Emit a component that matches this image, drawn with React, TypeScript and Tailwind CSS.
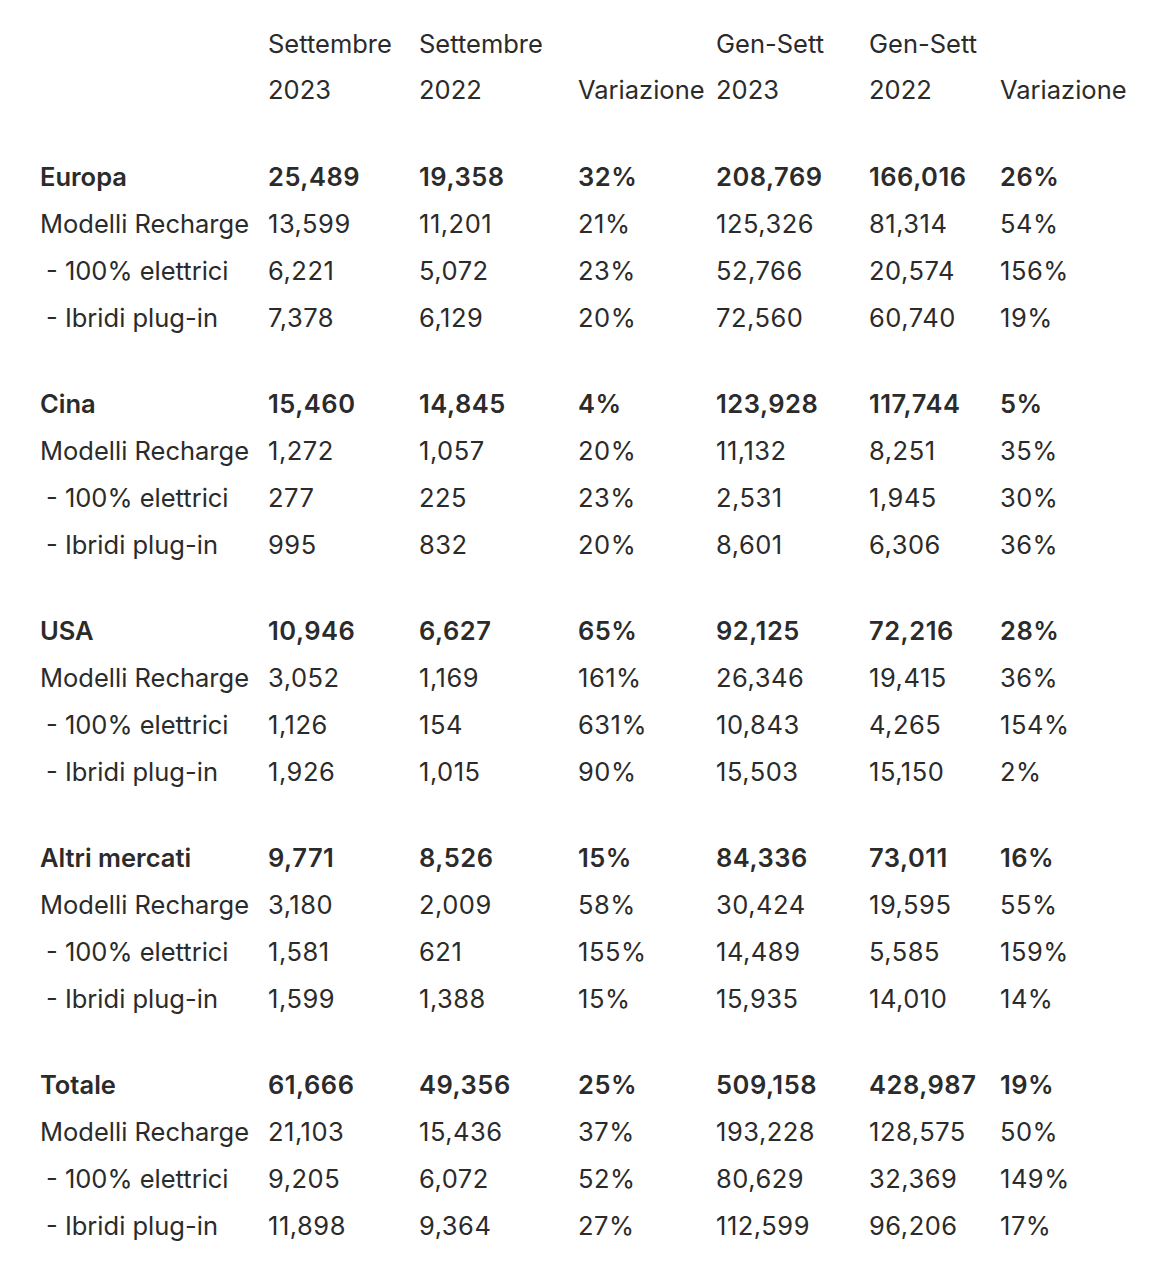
import React from "react";

type Row = { label: string; vals: string[]; bold?: boolean; sub?: boolean };

const groups: Row[][] = [
  [
    { label: "Europa", vals: ["25,489", "19,358", "32%", "208,769", "166,016", "26%"], bold: true },
    { label: "Modelli Recharge", vals: ["13,599", "11,201", "21%", "125,326", "81,314", "54%"] },
    { label: "- 100% elettrici", vals: ["6,221", "5,072", "23%", "52,766", "20,574", "156%"], sub: true },
    { label: "- Ibridi plug-in", vals: ["7,378", "6,129", "20%", "72,560", "60,740", "19%"], sub: true },
  ],
  [
    { label: "Cina", vals: ["15,460", "14,845", "4%", "123,928", "117,744", "5%"], bold: true },
    { label: "Modelli Recharge", vals: ["1,272", "1,057", "20%", "11,132", "8,251", "35%"] },
    { label: "- 100% elettrici", vals: ["277", "225", "23%", "2,531", "1,945", "30%"], sub: true },
    { label: "- Ibridi plug-in", vals: ["995", "832", "20%", "8,601", "6,306", "36%"], sub: true },
  ],
  [
    { label: "USA", vals: ["10,946", "6,627", "65%", "92,125", "72,216", "28%"], bold: true },
    { label: "Modelli Recharge", vals: ["3,052", "1,169", "161%", "26,346", "19,415", "36%"] },
    { label: "- 100% elettrici", vals: ["1,126", "154", "631%", "10,843", "4,265", "154%"], sub: true },
    { label: "- Ibridi plug-in", vals: ["1,926", "1,015", "90%", "15,503", "15,150", "2%"], sub: true },
  ],
  [
    { label: "Altri mercati", vals: ["9,771", "8,526", "15%", "84,336", "73,011", "16%"], bold: true },
    { label: "Modelli Recharge", vals: ["3,180", "2,009", "58%", "30,424", "19,595", "55%"] },
    { label: "- 100% elettrici", vals: ["1,581", "621", "155%", "14,489", "5,585", "159%"], sub: true },
    { label: "- Ibridi plug-in", vals: ["1,599", "1,388", "15%", "15,935", "14,010", "14%"], sub: true },
  ],
  [
    { label: "Totale", vals: ["61,666", "49,356", "25%", "509,158", "428,987", "19%"], bold: true },
    { label: "Modelli Recharge", vals: ["21,103", "15,436", "37%", "193,228", "128,575", "50%"] },
    { label: "- 100% elettrici", vals: ["9,205", "6,072", "52%", "80,629", "32,369", "149%"], sub: true },
    { label: "- Ibridi plug-in", vals: ["11,898", "9,364", "27%", "112,599", "96,206", "17%"], sub: true },
  ],
];

const cols = "grid grid-cols-[228px_151px_159px_138px_153px_131px_1fr]";

export default function App() {
  return (
    <div
      className="w-[1153px] h-[1280px] bg-white text-[#2b2b2b] pl-[40px] pt-[21px] text-[25.5px]"
      style={{ fontFamily: "Inter, Roboto, sans-serif" }}
    >
      <div className={`${cols} leading-[46px] items-end`}>
        <div />
        <div>Settembre<br />2023</div>
        <div>Settembre<br />2022</div>
        <div>Variazione</div>
        <div>Gen-Sett<br />2023</div>
        <div>Gen-Sett<br />2022</div>
        <div>Variazione</div>
      </div>
      <div className="h-[41px]" />
      {groups.map((g, gi) => (
        <div key={gi} className={gi < groups.length - 1 ? "mb-[39px]" : ""}>
          {g.map((r, ri) => (
            <div
              key={ri}
              className={`${cols} h-[47px] items-center whitespace-nowrap ${r.bold ? "font-semibold" : "font-normal"}`}
            >
              <div className={r.sub ? "pl-[6px]" : ""}>{r.label}</div>
              {r.vals.map((v, vi) => (
                <div key={vi} className="tracking-[0.02em]">{v}</div>
              ))}
            </div>
          ))}
        </div>
      ))}
    </div>
  );
}
